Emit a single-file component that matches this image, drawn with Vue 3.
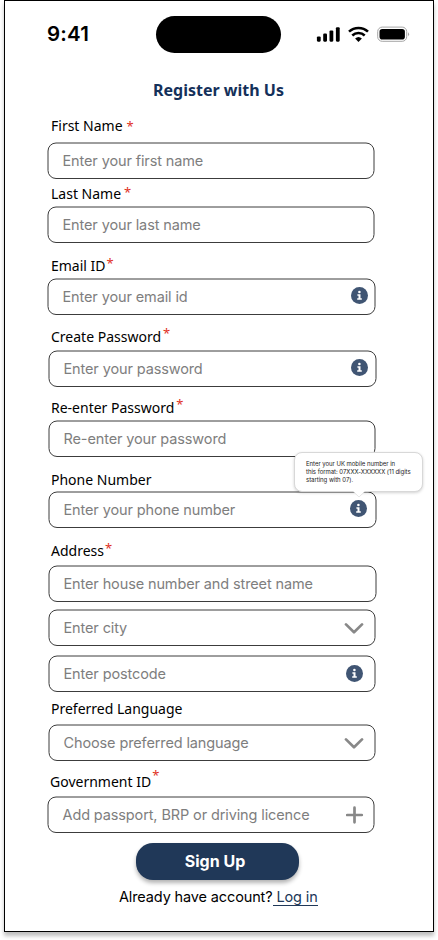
<script setup>
const groups = [
  { id: 'first', label: 'First Name', required: true, fields: [{ text: 'Enter your first name', x: 47, w: 328 }] },
  { id: 'last', label: 'Last Name', required: true, fields: [{ text: 'Enter your last name', x: 47, w: 328 }] },
  { id: 'email', label: 'Email ID', required: true, fields: [{ text: 'Enter your email id', x: 47, w: 329, icon: 'info' }] },
  { id: 'create', label: 'Create Password', required: true, fields: [{ text: 'Enter your password', x: 48, w: 329, icon: 'info' }] },
  { id: 'again', label: 'Re-enter Password', required: true, fields: [{ text: 'Re-enter your password', x: 48, w: 328 }] },
  {
    id: 'phone',
    label: 'Phone Number',
    fields: [{
      text: 'Enter your phone number', x: 48, w: 329, icon: 'info',
      tip: ['Enter your UK mobile number in', 'this format: 07XXX-XXXXXX (11 digits', 'starting with 07).'],
    }],
  },
  {
    id: 'address',
    label: 'Address',
    required: true,
    fields: [
      { text: 'Enter house number and street name', x: 48, w: 329 },
      { text: 'Enter city', x: 48, w: 328, icon: 'chevron' },
      { text: 'Enter postcode', x: 48, w: 328, icon: 'info' },
    ],
  },
  { id: 'language', label: 'Preferred Language', fields: [{ text: 'Choose preferred language', x: 48, w: 328, icon: 'chevron' }] },
  { id: 'gov', label: 'Government ID', required: true, fields: [{ text: 'Add passport, BRP or driving licence', x: 47, w: 328, icon: 'plus' }] },
]
</script>

<template>
  <main class="screen">
    <header class="status">
      <span class="time">9:41</span>
      <div class="island"></div>
      <svg class="indicators" width="94" height="18" viewBox="0 0 94 18">
        <rect x="0.9" y="10.5" width="3.8" height="5.2" rx="1.1" />
        <rect x="7.2" y="7.6" width="3.8" height="8.1" rx="1.1" />
        <rect x="13.5" y="4.4" width="3.8" height="11.3" rx="1.1" />
        <rect x="19.9" y="1.2" width="3.8" height="14.5" rx="1.1" />
        <g fill="none" stroke="#000" stroke-width="2.5">
          <path d="M33 5.7 A13.8 13.8 0 0 1 52 5.7" />
          <path d="M36.3 9.5 A8.8 8.8 0 0 1 48.7 9.5" />
        </g>
        <path d="M42.5 15.9 L39.1 12.5 A5 5 0 0 1 45.9 12.5 Z" />
        <rect x="61.7" y="1.1" width="29" height="14.2" rx="4.5" fill="none" stroke="#a6a6a6" />
        <rect x="63.5" y="2.9" width="25.4" height="10.6" rx="2.8" />
        <path d="M92 6.2 Q94.2 8.2 92 10.2 Z" fill="#a6a6a6" />
      </svg>
    </header>

    <h1 class="title">Register with Us</h1>

    <section v-for="g in groups" :key="g.id" class="group" :class="g.id">
      <div class="label">
        <span>{{ g.label }}</span>
        <span v-if="g.required" class="star">*</span>
      </div>
      <div v-for="f in g.fields" :key="f.text" class="field" :class="{ inset: f.x === 48, wide: f.w === 329 }">
        <svg class="frame" :width="f.w" height="37">
          <rect x="1" y="1" :width="f.w - 2" height="35.5" rx="8" fill="none" stroke="#3c3c3c" />
        </svg>
        <div class="row">
          <span class="placeholder">{{ f.text }}</span>
          <svg v-if="f.icon === 'info'" class="icon info" width="17" height="17" viewBox="0 0 17 17">
            <circle cx="8.5" cy="8.5" r="8.5" fill="#405573" />
            <circle cx="8.4" cy="5" r="1.3" fill="#fff" />
            <path d="M6.4 7.2h3.1v4h1.3v1.5H6.2v-1.5h1.3V8.7H6.4z" fill="#fff" />
          </svg>
          <svg v-else-if="f.icon === 'chevron'" class="icon chevron" width="20" height="12" viewBox="0 0 20 12">
            <path d="M2 2.4 L10 10.2 L18 2.4" fill="none" stroke="#888" stroke-width="2.7" stroke-linecap="round" stroke-linejoin="round" />
          </svg>
          <svg v-else-if="f.icon === 'plus'" class="icon plus" width="18" height="18" viewBox="0 0 18 18">
            <path d="M8.5 1.7V16.3M1.2 9H15.8" fill="none" stroke="#888" stroke-width="2.7" stroke-linecap="round" />
          </svg>
        </div>
        <div v-if="f.tip" class="tip">
          <span v-for="line in f.tip" :key="line">{{ line }}</span>
          <svg class="arrow" width="12" height="7" viewBox="0 0 12 7">
            <path d="M0 0H12L6 6Z" fill="#fff" />
            <path d="M0.5 0.8L6 6L11.5 0.8" fill="none" stroke="#ddd" stroke-width="0.7" />
          </svg>
        </div>
      </div>
    </section>

    <button class="signup">Sign Up</button>
    <p class="login">Already have account?<a class="link"><span class="gap">&nbsp;</span>Log in</a></p>
  </main>
</template>

<style>
body {
  min-height: 940px;
  background: #fff;
}
</style>

<style scoped>
.screen {
  box-sizing: border-box;
  width: 430px;
  height: 932px;
  margin-left: 4px;
  border: 1px solid #000;
  background: #fff;
  box-shadow: 0 4px 4px rgba(0, 0, 0, 0.25);
  display: flex;
  flex-direction: column;
  font-family: "Noto Sans", sans-serif;
  color: #000;
}
.status {
  height: 52px;
  padding-top: 15px;
  box-sizing: border-box;
  display: flex;
  align-items: flex-start;
}
.time {
  width: 109px;
  margin-left: 42px;
  padding-top: 6px;
  font: 600 20.5px/24px Inter, sans-serif;
  letter-spacing: 0.2px;
}
.island {
  width: 125px;
  height: 37px;
  border-radius: 19px;
  background: #000;
}
.indicators {
  margin: 10px 0 0 35px;
}
.title {
  margin: 25px 0 0;
  padding-right: 1px;
  text-align: center;
  font-size: 16px;
  line-height: 24px;
  font-weight: 700;
  color: #14305a;
}
.label {
  display: flex;
  height: 20px;
  padding-left: 46px;
  font-size: 14px;
  line-height: 20px;
}
.star {
  margin: var(--star-y) 0 0 var(--star-x);
  font-size: 13px;
  color: #e0301e;
}
.first { margin-top: 14px; --gap: 6px; --star-x: 4px; --star-y: 0; }
.last { margin-top: 5px; --gap: 2px; --star-x: 3px; --star-y: -2px; }
.email { margin-top: 13px; --gap: 2px; --star-x: 1px; --star-y: -3px; }
.create { margin-top: 12px; --gap: 3px; --star-x: 2px; --star-y: -4px; }
.again { margin-top: 11px; --gap: 2px; --star-x: 2px; --star-y: -4px; }
.phone { margin-top: 13px; --gap: 1px; }
.address { margin-top: 13px; --gap: 4px; --star-x: 1px; --star-y: -3px; }
.language { margin-top: 7px; --gap: 5px; }
.gov { margin-top: 11px; --gap: 4px; --star-x: 1px; --star-y: -7px; }
.gov .label { padding-left: 45px; }
.field {
  position: relative;
  display: grid;
  width: 328px;
  height: 37px;
  margin-left: 42px;
  margin-top: var(--gap);
}
.field.inset { margin-left: 43px; }
.field.wide { width: 329px; }
.address .field:nth-child(3) { margin-top: 7px; }
.address .field:nth-child(4) { margin-top: 9px; }
.frame,
.row {
  grid-area: 1 / 1;
}
.row {
  display: flex;
  align-items: center;
  justify-content: space-between;
  padding: 0 11px 0 15.5px;
}
.placeholder {
  font: 400 14.5px/18px Inter, sans-serif;
  letter-spacing: -0.12px;
  color: #7e7e7e;
  white-space: nowrap;
}
.icon { flex: none; }
.email .info { margin: -2px -3px 0 0; }
.create .info { margin: -2px -2px 0 0; }
.phone .info { margin: -2px -1px 0 0; }
.address .info { margin-right: 2px; }
.chevron { margin-right: 1px; }
.tip {
  position: absolute;
  left: 246px;
  top: -39px;
  width: 129px;
  height: 40px;
  box-sizing: border-box;
  padding: 7px 0 0 11px;
  border: 1px solid #d8d8d8;
  border-radius: 8px;
  background: #fff;
  box-shadow: 0 1px 3px rgba(0, 0, 0, 0.18);
  display: flex;
  flex-direction: column;
  font: 400 6px/8px Inter, sans-serif;
  letter-spacing: -0.035px;
  color: #222;
  white-space: nowrap;
}
.arrow {
  position: absolute;
  left: 58px;
  top: 38px;
}
.signup {
  width: 163px;
  height: 37px;
  margin: 10px 0 0 131px;
  padding: 0 5px 0 0;
  border: 0;
  border-radius: 17px;
  background: #203858;
  box-shadow: 0 3px 4px rgba(0, 0, 0, 0.3);
  color: #fff;
  font: 700 16px/37px Inter, sans-serif;
}
.login {
  margin: 7px 0 0 114px;
  font: 400 14.5px/20px Inter, sans-serif;
  letter-spacing: -0.13px;
}
.link {
  color: #203858;
  border-bottom: 1px solid #203858;
}
</style>
